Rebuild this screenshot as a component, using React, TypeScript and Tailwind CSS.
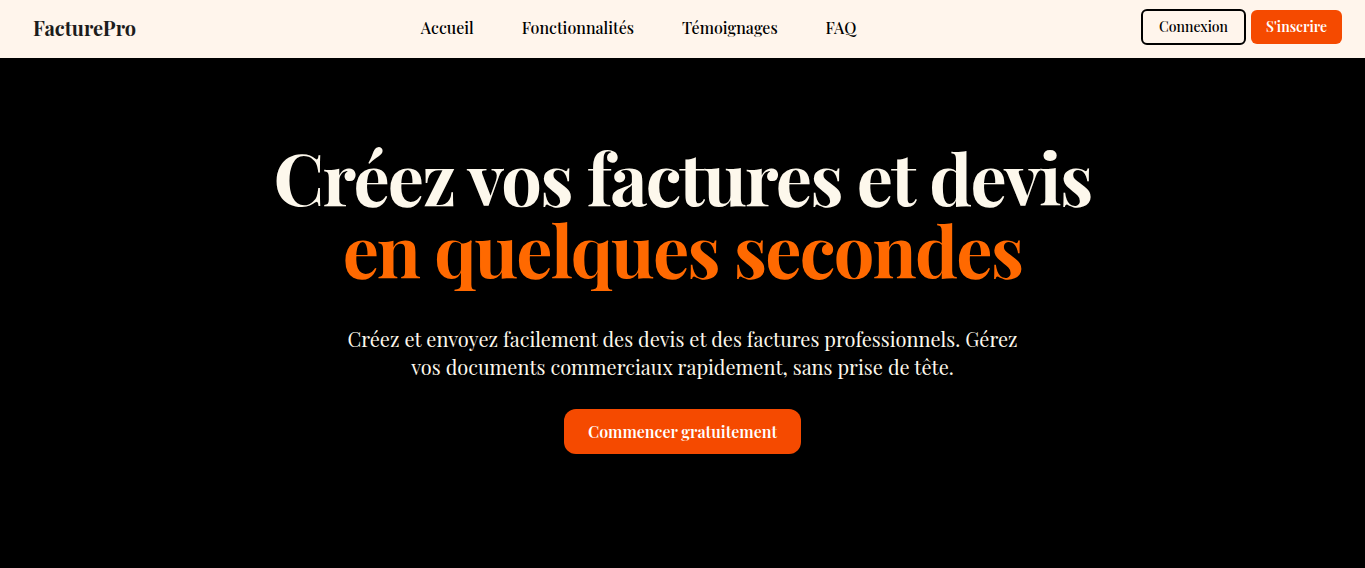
import React from "react";

const serif = { fontFamily: '"Playfair Display", "Liberation Serif", "DejaVu Serif", serif' };

export default function App() {
  return (
    <div className="min-h-screen bg-black" style={serif}>
      <header className="h-[58px] bg-[#fff5ec] flex items-center justify-between pl-[33px] pr-[23px] pb-[2px]">
        <div className="text-[20px] font-bold text-[#1c1c1c]">FacturePro</div>
        <nav className="flex items-center gap-12 text-[16px] font-medium text-black">
          <a>Accueil</a>
          <a>Fonctionnalités</a>
          <a>Témoignages</a>
          <a>FAQ</a>
        </nav>
        <div className="flex items-center gap-[5px] mb-[3px]">
          <button className="h-[36px] px-[16px] border-2 border-black rounded-md text-[14px] font-medium text-black bg-transparent">Connexion</button>
          <button className="h-[34px] px-[15px] rounded-md text-[14px] font-semibold text-white bg-orange-600">S'inscrire</button>
        </div>
      </header>
      <main className="flex flex-col items-center pt-[82px] text-center">
        <h1 className="text-[72px] leading-[72px] tracking-tight font-bold text-[#fdf8ec]">
          Créez vos factures et devis
          <br />
          <span className="text-orange-500">en quelques secondes</span>
        </h1>
        <p className="mt-[41px] max-w-[680px] text-[20px] leading-[28px] text-[#fdf8ec]">
          Créez et envoyez facilement des devis et des factures professionnels. Gérez vos documents commerciaux rapidement, sans prise de tête.
        </p>
        <button className="mt-[28px] h-[45px] px-[24px] rounded-xl bg-orange-600 text-white text-[16px] font-semibold">
          Commencer gratuitement
        </button>
      </main>
    </div>
  );
}
